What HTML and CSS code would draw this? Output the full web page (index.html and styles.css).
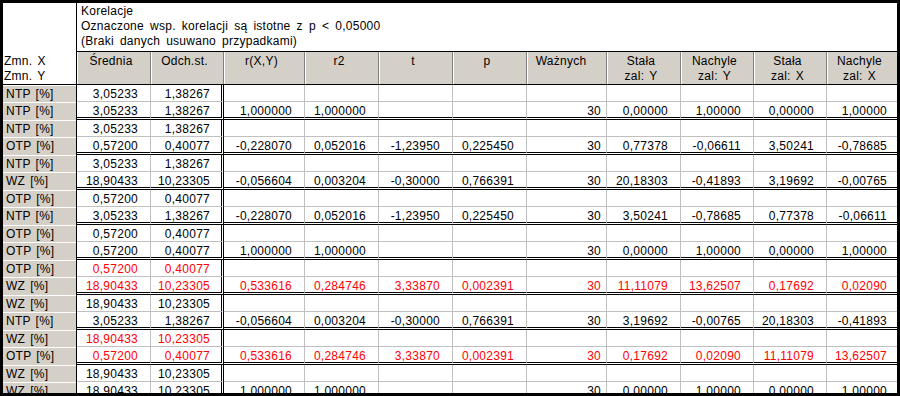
FILE: index.html
```html
<!DOCTYPE html>
<html lang="pl">
<head>
<meta charset="utf-8">
<title>Korelacje</title>
<link rel="stylesheet" href="styles.css">
</head>
<body>
<div class="window">
  <div class="sheet">
    <div class="title-band">
      <div class="corner"></div>
      <div class="title">
        <div>Korelacje</div>
        <div>Oznaczone wsp. korelacji są istotne z p &lt; 0,05000</div>
        <div>(Braki danych usuwano przypadkami)</div>
      </div>
    </div>
    <div class="grid head">
      <div class="rh-top">Zmn. X<br>Zmn. Y</div>
      <div class="hc">Średnia</div>
      <div class="hc">Odch.st.</div>
      <div class="hc">r(X,Y)</div>
      <div class="hc">r2</div>
      <div class="hc">t</div>
      <div class="hc">p</div>
      <div class="hc left">Ważnych</div>
      <div class="hc">Stała<br>zal: Y</div>
      <div class="hc">Nachyle<br>zal: Y</div>
      <div class="hc">Stała<br>zal: X</div>
      <div class="hc last">Nachyle<br>zal: X</div>
    </div>
    <div id="rows"></div>
  </div>
</div>
<script src="app.js"></script>
</body>
</html>
```
FILE: styles.css
```css
html, body {
  margin: 0;
  padding: 0;
  background: #000;
}
.window {
  width: 900px;
  height: 396px;
  box-sizing: border-box;
  padding: 3px;
  background: #000;
  overflow: hidden;
  font-family: "Liberation Sans", Arial, sans-serif;
  font-size: 12px;
  line-height: 15px;
  letter-spacing: 0.25px;
  word-spacing: 1.5px;
  color: #000;
}
.sheet {
  width: 894px;
  height: 390px;
  background: #fff;
  overflow: hidden;
}
.title-band {
  display: flex;
  height: 49px;
}
.corner {
  width: 74px;
  box-sizing: border-box;
  border-right: 1px solid #000;
  background: #fff;
}
.title {
  flex: 1;
  box-sizing: border-box;
  padding: 1px 0 0 4px;
  border-bottom: 1px solid #000;
  background: #fff;
  white-space: nowrap;
  word-spacing: 2.5px;
}
.grid {
  display: grid;
  grid-template-columns: 74px 74px 73px 81px 74px 74px 74px 80px 74px 73px 73px 70px;
}
.head {
  height: 32px;
  border-bottom: 1px solid #000;
  box-sizing: content-box;
}
.rh-top {
  box-sizing: border-box;
  height: 32px;
  border-right: 1px solid #000;
  padding: 2px 0 0 1px;
  background: #fff;
}
.hc {
  box-sizing: border-box;
  height: 32px;
  background: #d4d0c8;
  border-left: 1px solid #fff;
  border-right: 1px solid #808080;
  padding: 2px 6px 0 0;
  text-align: center;
  white-space: nowrap;
}
.hc.left {
  padding-right: 12px;
}
.hc.last {
  border-right: none;
}
.c {
  box-sizing: border-box;
  height: 17px;
  padding: 2px 12px 0 0;
  text-align: right;
  white-space: nowrap;
  border-right: 1px solid #c0c0c0;
  background: #fff;
}
.r1 .c {
  border-bottom: 1px solid #c0c0c0;
}
.r2 .c {
  height: 18px;
  border-bottom: 3px double #000;
}
.c.dbl {
  border-right: 3px double #000;
  padding-right: 11px;
}
.c.n {
  padding-right: 5px;
}
.c.last {
  border-right: none;
  padding-right: 10px;
}
.c.rh {
  background: #d4d0c8;
  border-right: 1px solid #000;
  box-shadow: inset 0 1px 0 #fff;
  text-align: left;
  padding: 2px 0 0 3px;
}
.r1 .c.rh,
.r2 .c.rh {
  border-bottom: none;
}
.red .c {
  color: #f00;
}
.red .c.rh {
  color: #000;
}
```
FILE: app.js
```js
const data = [
  ["NTP [%]", "NTP [%]", ["3,05233","1,38267"], ["3,05233","1,38267","1,000000","1,000000","","","30","0,00000","1,00000","0,00000","1,00000"], false],
  ["NTP [%]", "OTP [%]", ["3,05233","1,38267"], ["0,57200","0,40077","-0,228070","0,052016","-1,23950","0,225450","30","0,77378","-0,06611","3,50241","-0,78685"], false],
  ["NTP [%]", "WZ [%]", ["3,05233","1,38267"], ["18,90433","10,23305","-0,056604","0,003204","-0,30000","0,766391","30","20,18303","-0,41893","3,19692","-0,00765"], false],
  ["OTP [%]", "NTP [%]", ["0,57200","0,40077"], ["3,05233","1,38267","-0,228070","0,052016","-1,23950","0,225450","30","3,50241","-0,78685","0,77378","-0,06611"], false],
  ["OTP [%]", "OTP [%]", ["0,57200","0,40077"], ["0,57200","0,40077","1,000000","1,000000","","","30","0,00000","1,00000","0,00000","1,00000"], false],
  ["OTP [%]", "WZ [%]", ["0,57200","0,40077"], ["18,90433","10,23305","0,533616","0,284746","3,33870","0,002391","30","11,11079","13,62507","0,17692","0,02090"], true],
  ["WZ [%]", "NTP [%]", ["18,90433","10,23305"], ["3,05233","1,38267","-0,056604","0,003204","-0,30000","0,766391","30","3,19692","-0,00765","20,18303","-0,41893"], false],
  ["WZ [%]", "OTP [%]", ["18,90433","10,23305"], ["0,57200","0,40077","0,533616","0,284746","3,33870","0,002391","30","0,17692","0,02090","11,11079","13,62507"], true],
  ["WZ [%]", "WZ [%]", ["18,90433","10,23305"], ["18,90433","10,23305","1,000000","1,000000","","","30","0,00000","1,00000","0,00000","1,00000"], false]
];

function cellClass(i) {
  if (i === 1) return "c dbl";
  if (i === 6) return "c n";
  if (i === 10) return "c last";
  return "c";
}

function buildRow(label, values, cls, red) {
  const row = document.createElement("div");
  row.className = "grid " + cls + (red ? " red" : "");
  const rh = document.createElement("div");
  rh.className = "c rh";
  rh.textContent = label;
  row.appendChild(rh);
  for (let i = 0; i < 11; i++) {
    const d = document.createElement("div");
    d.className = cellClass(i);
    d.textContent = values[i] || "";
    row.appendChild(d);
  }
  return row;
}

const host = document.getElementById("rows");
data.forEach(([x, y, v1, v2, red]) => {
  host.appendChild(buildRow(x, v1, "r1", red));
  host.appendChild(buildRow(y, v2, "r2", red));
});
```
